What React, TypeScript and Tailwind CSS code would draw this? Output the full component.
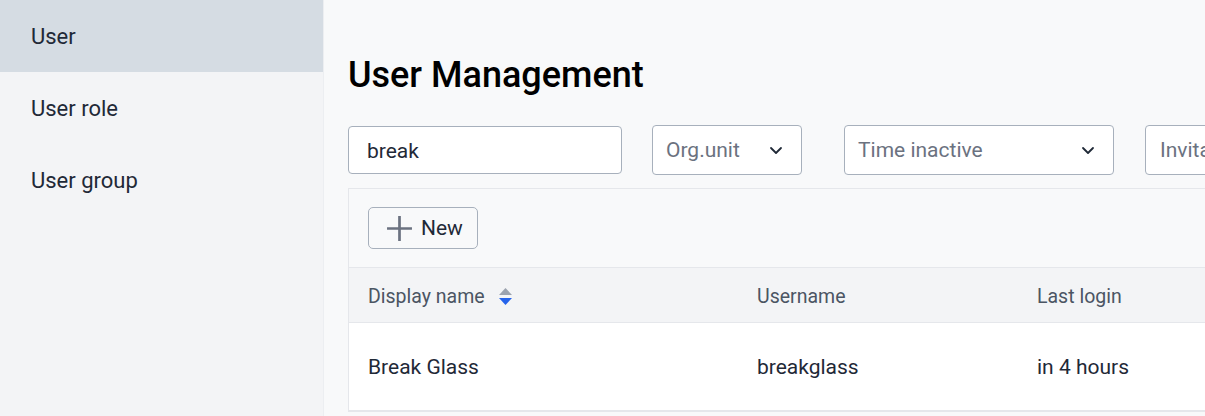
import React from "react";

const navItems = ["User", "User role", "User group"];

function Chevron() {
  return (
    <svg width="14" height="9" viewBox="0 0 14 9" fill="none" className="shrink-0">
      <path d="M2 2l5 5 5-5" stroke="#1f2937" strokeWidth="1.8" strokeLinecap="round" strokeLinejoin="round" />
    </svg>
  );
}

function Select({ label, width }: { label: string; width: string }) {
  return (
    <div className={`${width} h-[50px] shrink-0 flex items-center justify-between bg-white border border-[#a7b0bc] rounded-[4px] pl-[13px] pr-[18px]`}>
      <span className="text-[21px] text-[#6b7280] whitespace-nowrap pt-[2px]">{label}</span>
      <Chevron />
    </div>
  );
}

export default function App() {
  return (
    <div className="flex h-[416px] w-[1205px] overflow-hidden bg-[#f8f9fa] font-['Roboto',sans-serif] text-[#1f2937]">
      <aside className="w-[324px] shrink-0 bg-[#f3f4f6] border-r border-[#eceef1]">
        {navItems.map((item, i) => (
          <div
            key={item}
            className={`h-[72px] flex items-center pl-[31px] text-[22px] ${i === 0 ? "bg-[#d5dce3]" : ""}`}
          >
            {item}
          </div>
        ))}
      </aside>

      <main className="flex-1 min-w-0 pl-[24px] pt-[52px]">
        <h1 className="text-[36px] font-medium text-black leading-[46px]">User Management</h1>

        <div className="flex items-center mt-[27px] whitespace-nowrap">
          <div className="w-[274px] h-[48px] shrink-0 flex items-center bg-white border border-[#a7b0bc] rounded-[4px] pl-[18px] pt-[4px] text-[21px]">
            break
          </div>
          <div className="ml-[30px]">
            <Select label="Org.unit" width="w-[150px]" />
          </div>
          <div className="ml-[42px]">
            <Select label="Time inactive" width="w-[270px]" />
          </div>
          <div className="ml-[31px] w-[200px] h-[50px] shrink-0 flex items-center bg-white border border-[#a7b0bc] rounded-[4px] pl-[14px]">
            <span className="text-[21px] text-[#6b7280] pt-[2px]">Invitation status</span>
          </div>
        </div>

        <div className="mt-[13px] border border-[#e5e7eb] border-r-0 w-[900px]">
          <div className="h-[78px] flex items-center pl-[19px]">
            <button className="h-[42px] w-[110px] flex items-center gap-[8px] pl-[17px] border border-[#a7b0bc] rounded-[5px] bg-[#f8f9fa] text-[21px] text-[#1f2937]">
              <svg width="27" height="27" viewBox="0 0 26 26" fill="none">
                <path d="M13 1v24M1 13h24" stroke="#6b7280" strokeWidth="2.6" />
              </svg>
              <span className="pt-[1px]">New</span>
            </button>
          </div>
          <div className="h-[56px] grid grid-cols-[389px_280px_1fr] items-center pl-[19px] pt-[3px] bg-[#f3f4f6] border-y border-[#e5e7eb] text-[19.5px] text-[#4b5563]">
            <div className="flex items-center gap-[14px]">
              Display name
              <svg width="13" height="17" viewBox="0 0 13 17">
                <path d="M6.5 0L13 7H0z" fill="#9ca3af" />
                <path d="M0 10h13l-6.5 7z" fill="#2563eb" />
              </svg>
            </div>
            <div>Username</div>
            <div>Last login</div>
          </div>
          <div className="h-[88px] grid grid-cols-[389px_280px_1fr] items-center pl-[19px] pt-[3px] bg-white border-b border-[#e5e7eb] text-[21px]">
            <div>Break Glass</div>
            <div>breakglass</div>
            <div>in 4 hours</div>
          </div>
        </div>
      </main>
    </div>
  );
}
